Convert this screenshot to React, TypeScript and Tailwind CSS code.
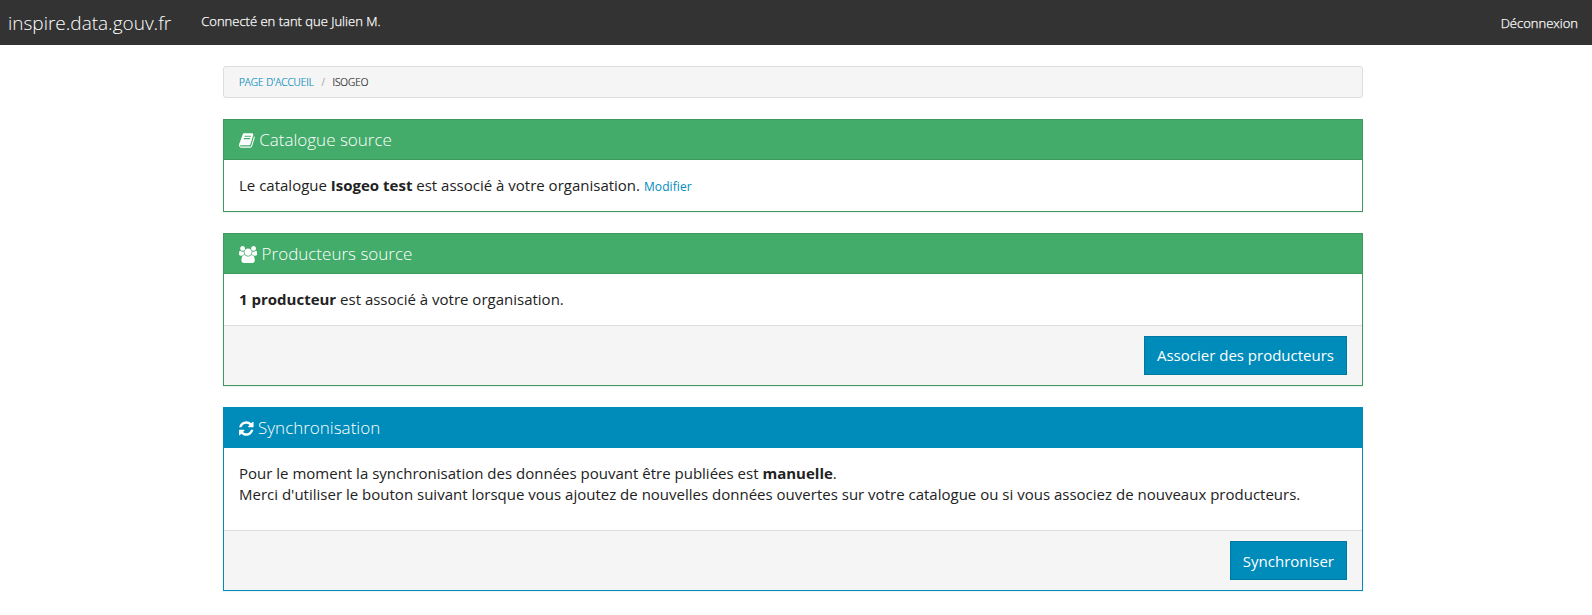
import type { ReactNode } from 'react';

type IconProps = { viewBox: string; width: string; path: string };

function Icon({ viewBox, width, path }: IconProps) {
  return (
    <svg viewBox={viewBox} className={`inline-block h-[17px] shrink-0 align-[-3px] ${width}`} fill="currentColor" aria-hidden="true">
      <path d={path} />
    </svg>
  );
}

const BOOK =
  'M1703 478q40 57 18 129l-275 906q-19 64-76.5 107.5t-122.5 43.5h-923q-77 0-148.5-53.5t-99.5-131.5q-24-67-2-127 0-4 3-27t4-37q1-8-3-21.5t-3-19.5q2-11 8-21t16.5-23.5 16.5-23.5q23-38 45-91.5t30-91.5q3-10 .5-30t-.5-28q3-11 17-28t17-23q21-36 42-92t25-90q1-9-2.5-32t.5-28q4-13 22-30.5t22-22.5q19-26 42.5-84.5t27.5-96.5q1-8-3-25.5t-2-26.5q2-8 9-18t18-23 17-21q8-12 16.5-30.5t15-35 16-36 19.5-32 26.5-23.5 36-11.5 47.5 5.5l-1 3q38-9 51-9h761q74 0 114 56t18 130l-274 906q-36 119-71.5 153.5t-128.5 34.5h-869q-27 0-38 15-11 16-1 43 24 70 144 70h923q29 0 56-15.5t35-41.5l300-987q7-22 5-57 38 15 59 43zm-1064 2q-4 13 2 22.5t20 9.5h608q13 0 25.5-9.5t16.5-22.5l21-64q4-13-2-22.5t-20-9.5h-608q-13 0-25.5 9.5t-16.5 22.5zm-83 256q-4 13 2 22.5t20 9.5h608q13 0 25.5-9.5t16.5-22.5l21-64q4-13-2-22.5t-20-9.5h-608q-13 0-25.5 9.5t-16.5 22.5z';

const GROUP =
  'M593 896q-162 5-265 128h-134q-82 0-138-40.5t-56-118.5q0-353 124-353 6 0 43.5 21t97.5 42.5 119 21.5q67 0 133-23-5 37-5 66 0 143 80 256zm1071 637q0 120-73 189.5t-194 69.5h-874q-121 0-194-69.5t-73-189.5q0-53 3.5-103.5t14-109 26.5-108.5 43-97.5 62-81 85.5-53.5 111.5-20q10 0 43 21.5t73 48 107 48 135 21.5 135-21.5 107-48 73-48 43-21.5q61 0 111.5 20t85.5 53.5 62 81 43 97.5 26.5 108.5 14 109 3.5 103.5zm-1024-1277q0 106-75 181t-181 75-181-75-75-181 75-181 181-75 181 75 75 181zm704 384q0 159-112.5 271.5t-271.5 112.5-271.5-112.5-112.5-271.5 112.5-271.5 271.5-112.5 271.5 112.5 112.5 271.5zm576 225q0 78-56 118.5t-138 40.5h-134q-103-123-265-128 80-113 80-256 0-29-5-66 66 23 133 23 59 0 119-21.5t97.5-42.5 43.5-21q124 0 124 353zm-128-609q0 106-75 181t-181 75-181-75-75-181 75-181 181-75 181 75 75 181z';

const REFRESH =
  'M1639 1056q0 5-1 7-64 268-268 434.5t-478 166.5q-146 0-282.5-55t-243.5-157l-129 129q-19 19-45 19t-45-19-19-45v-448q0-26 19-45t45-19h448q26 0 45 19t19 45-19 45l-137 137q71 66 161 102t187 36q134 0 250-65t186-179q11-17 53-117 8-23 30-23h192q13 0 22.5 9.5t9.5 22.5zm25-800v448q0 26-19 45t-45 19h-448q-26 0-45-19t-19-45 19-45l138-138q-148-137-349-137-134 0-250 65t-186 179q-11 17-53 117-8 23-30 23h-199q-13 0-22.5-9.5t-9.5-22.5v-7q65-268 270-434.5t480-166.5q146 0 284 55.5t245 156.5l130-129q19-19 45-19t45 19 19 45z';

type PanelProps = { tone: 'success' | 'primary'; icon: ReactNode; title: string; children: ReactNode; action?: ReactNode };

const TONES = {
  success: { border: 'border-[#3c9a5f]', head: 'bg-[#43ac6a] border-[#3c9a5f]' },
  primary: { border: 'border-[#008cba]', head: 'bg-[#008cba] border-[#008cba]' },
};

function Panel({ tone, icon, title, children, action }: PanelProps) {
  return (
    <section className={`border bg-white shadow-[0_1px_1px_rgba(0,0,0,0.05)] ${TONES[tone].border}`}>
      <h3 className={`h-10 border-b px-[15px] py-[10px] text-[17px] leading-[19px] font-light text-white ${TONES[tone].head}`}>
        {icon} {title}
      </h3>
      <div className="p-[15px]">{children}</div>
      {action && (
        <footer className="flex justify-end border-t border-[#ddd] bg-[#f5f5f5] px-[15px] py-[10px]">{action}</footer>
      )}
    </section>
  );
}

const BUTTON = 'h-[39px] border border-[#0079a1] bg-[#008cba] px-3 text-[15px] leading-[21px] text-white';

export default function App() {
  return (
    <div className="min-h-[615px] bg-white font-['Open_Sans',sans-serif] text-[15px] leading-[21px] text-[#222]">
      <nav className="flex h-[45px] items-center bg-[#333] pr-[14px] pl-2 text-white">
        <a className="pt-[2px] text-[19px] leading-[21px] font-light">inspire.data.gouv.fr</a>
        <span className="ml-[30px] pb-[3px] text-[13px] font-light [-webkit-text-stroke:0.25px]">Connecté en tant que Julien M.</span>
        <a className="ml-auto pt-[2px] text-[13px] font-light [-webkit-text-stroke:0.25px]">Déconnexion</a>
      </nav>
      <main className="ml-[223px] flex w-[1140px] flex-col gap-[21px] pt-[21px]">
        <ol className="flex h-8 items-center rounded-[3px] border border-[#ddd] bg-[#f5f5f5] px-[15px] text-[10px] font-light uppercase [-webkit-text-stroke:0.2px]">
          <li className="text-[#008cba]">Page d'accueil</li>
          <li className="px-[7.5px] text-[#999]">/</li>
          <li className="text-[#222]">Isogeo</li>
        </ol>
        <Panel tone="success" icon={<Icon viewBox="64 0 1664 1792" width="w-[15.8px]" path={BOOK} />} title="Catalogue source">
          <p>
            Le catalogue <strong>Isogeo test</strong> est associé à votre organisation.{' '}
            <a className="text-[12px] leading-none tracking-[0.1px] text-[#008cba]">Modifier</a>
          </p>
        </Panel>
        <Panel
          tone="success"
          icon={<Icon viewBox="0 0 1920 1792" width="w-[18.2px]" path={GROUP} />}
          title="Producteurs source"
          action={<button className={BUTTON}>Associer des producteurs</button>}
        >
          <p>
            <strong>1 producteur</strong> est associé à votre organisation.
          </p>
        </Panel>
        <Panel
          tone="primary"
          icon={<Icon viewBox="128 0 1536 1792" width="w-[14.6px]" path={REFRESH} />}
          title="Synchronisation"
          action={<button className={`${BUTTON} pt-[2px]`}>Synchroniser</button>}
        >
          <p className="mb-[10px] tracking-[0.005px]">
            Pour le moment la synchronisation des données pouvant être publiées est <strong>manuelle</strong>.
            <br />
            Merci d'utiliser le bouton suivant lorsque vous ajoutez de nouvelles données ouvertes sur votre catalogue ou si
            vous associez de nouveaux producteurs.
          </p>
        </Panel>
      </main>
    </div>
  );
}
